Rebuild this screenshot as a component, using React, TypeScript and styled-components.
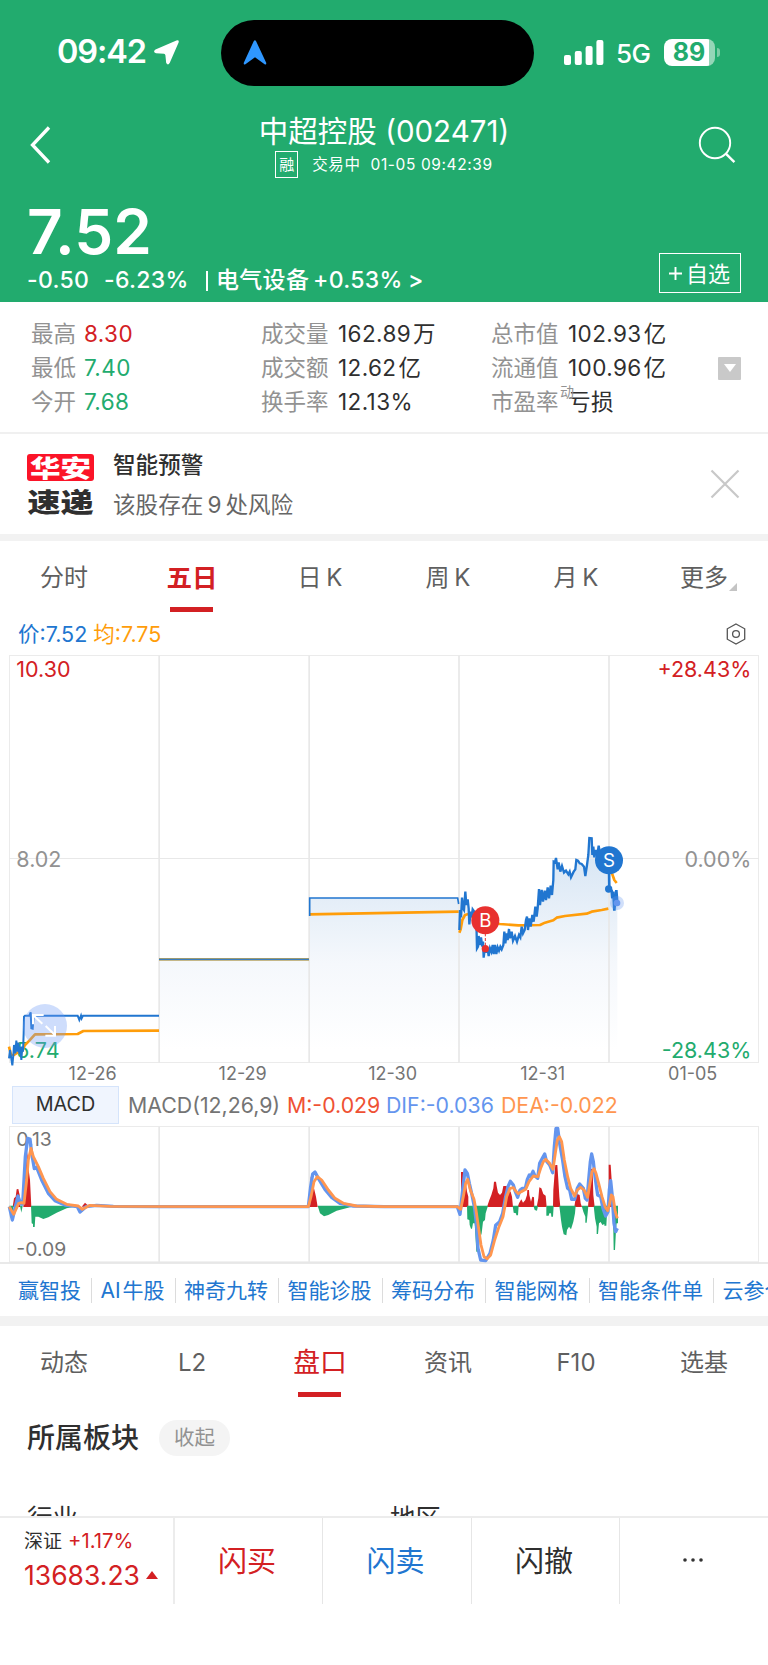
import styled, { createGlobalStyle, css } from "styled-components";

const COLORS = {
  green: "#22ab6e",
  red: "#d32023",
  blue: "#2176d0",
  orange: "#ff9d0a",
  dark: "#2f2f2f",
  gray: "#929292",
};

const STATS = [
  [
    { label: "最高", value: "8.30", color: COLORS.red },
    { label: "成交量", value: "162.89", unit: "万" },
    { label: "总市值", value: "102.93", unit: "亿" },
  ],
  [
    { label: "最低", value: "7.40", color: COLORS.green },
    { label: "成交额", value: "12.62", unit: "亿" },
    { label: "流通值", value: "100.96", unit: "亿" },
  ],
  [
    { label: "今开", value: "7.68", color: COLORS.green },
    { label: "换手率", value: "12.13%" },
    { label: "市盈率", value: "亏损", sup: "动" },
  ],
];

const PERIODS = ["分时", "五日", "日 K", "周 K", "月 K", "更多"];
const SECTIONS = ["动态", "L2", "盘口", "资讯", "F10", "选基"];
const LINKS = ["赢智投", "AI 牛股", "神奇九转", "智能诊股", "筹码分布", "智能网格", "智能条件单", "云参仓"];
const DATES = ["12-26", "12-29", "12-30", "12-31", "01-05"];

function App() {
  return (
    <Page>
      <GlobalStyle />
      <Header />
      <Stats />
      <Alert />
      <Gap $height={7} />
      <Tabs items={PERIODS} active={1} bold />
      <PriceRow>
        <Price>
          <Colored $color={COLORS.blue}>价:7.52</Colored>
          <Colored $color={COLORS.orange}>均:7.75</Colored>
        </Price>
        <svg width="20" height="22" viewBox="0 0 20 22" fill="none" stroke="#555" strokeWidth="1.3">
          <path d="M10 1 L18.7 5.8 V16.2 L10 21 L1.3 16.2 V5.8 Z" />
          <circle cx="10" cy="11" r="3.4" />
        </svg>
      </PriceRow>
      <PriceChart />
      <MacdHead>
        <MacdButton>MACD</MacdButton>
        <MacdItem $color="#747474" $width={151}>MACD(12,26,9)</MacdItem>
        <MacdItem $color="#ef5133" $width={91}>M:-0.029</MacdItem>
        <MacdItem $color="#6495ee" $width={107}>DIF:-0.036</MacdItem>
        <MacdItem $color="#ff964f" $width={115}>DEA:-0.022</MacdItem>
      </MacdHead>
      <MacdChart />
      <Links>
        {LINKS.map((name) => (
          <LinkItem key={name}>{name}</LinkItem>
        ))}
      </Links>
      <Gap $height={10} />
      <Tabs items={SECTIONS} active={2} />
      <Board />
      <BottomBar />
    </Page>
  );
}

export default App;

function Header() {
  return (
    <Top>
      <StatusBar>
        <Clock>
          09:42
          <svg width="25" height="25" viewBox="0 0 25 25" fill="#fff">
            <path d="M22.4 .5 Q25.4 -.5 24.6 2.6 L15.8 22.8 Q14 26 12.2 23 L11.4 15.2 Q11.2 13.9 10 13.8 L2 13.2 Q-1.6 11.8 1.5 9.6 Z" />
          </svg>
        </Clock>
        <Island>
          <svg width="24" height="25" viewBox="0 0 24 25" fill="#2f97ff">
            <path d="M10.7 1.2 Q12 -.6 13.1 1.2 L23.2 22.8 Q23.6 25 21.6 24.2 L12 17.3 L2.4 24.2 Q.4 25 .8 22.8 Z" />
          </svg>
        </Island>
        <Signal>
          <svg width="40" height="25" viewBox="0 0 40 25" fill="#fff">
            <rect x="0" y="15" width="7" height="10" rx="2" />
            <rect x="10.8" y="11" width="7" height="14" rx="2" />
            <rect x="21.6" y="6" width="7" height="19" rx="2" />
            <rect x="32.4" y="0" width="7" height="25" rx="2" />
          </svg>
          <Network>5G</Network>
          <Battery>89</Battery>
        </Signal>
      </StatusBar>
      <NavBar>
        <svg width="22" height="38" viewBox="0 0 22 38" fill="none" stroke="#fff" strokeWidth="3.3">
          <path d="M20 1.5 L3.5 19 L20 36.5" />
        </svg>
        <Titles>
          <Title>中超控股 (002471)</Title>
          <SubTitle>
            <Margin>融</Margin>
            <span>交易中</span>
            <span>01-05 09:42:39</span>
          </SubTitle>
        </Titles>
        <svg width="38" height="38" viewBox="0 0 38 38" fill="none" stroke="#fff" strokeWidth="1.9">
          <circle cx="17" cy="17" r="15.2" />
          <path d="M27.8 27.6 L36.4 36.2" strokeWidth="2.4" />
        </svg>
      </NavBar>
      <Quote>
        <div>
          <BigPrice>7.52</BigPrice>
          <Change>
            <i>-0.50</i>
            <i>-6.23%</i>
            <Divider />
            <i>电气设备</i>
            <i>+0.53%</i>
            <i>&gt;</i>
          </Change>
        </div>
        <AddButton>
          <svg width="13" height="13" viewBox="0 0 13 13" stroke="#fff" strokeWidth="1.9">
            <path d="M6.5 0 V13 M0 6.5 H13" />
          </svg>
          自选
        </AddButton>
      </Quote>
    </Top>
  );
}

function Stats() {
  return (
    <StatsBox>
      {STATS.map((row, i) => (
        <StatsRow key={i}>
          {row.map((s) => (
            <Stat key={s.label}>
              <StatLabel $short={s.label.length === 2}>
                {s.label}
                {s.sup && <Sup>{s.sup}</Sup>}
              </StatLabel>
              <StatValue $color={s.color}>
                {s.value}
                {s.unit && <Unit>{s.unit}</Unit>}
              </StatValue>
            </Stat>
          ))}
          {i === 1 && (
            <Fold>
              <svg width="12" height="8" viewBox="0 0 12 8" fill="#fff">
                <path d="M0 0 H12 L6 8 Z" />
              </svg>
            </Fold>
          )}
        </StatsRow>
      ))}
    </StatsBox>
  );
}

function Alert() {
  return (
    <AlertBox>
      <Logo>
        <LogoTop>
          <LogoWord $size={30.5}>华安</LogoWord>
        </LogoTop>
        <LogoBottom>
          <LogoWord $size={33}>速递</LogoWord>
        </LogoBottom>
      </Logo>
      <AlertText>
        <AlertTitle>智能预警</AlertTitle>
        <AlertDesc>该股存在<b>9</b>处风险</AlertDesc>
      </AlertText>
      <svg width="30" height="30" viewBox="0 0 30 30" stroke="#c8c8c8" strokeWidth="2.2">
        <path d="M1.5 1.5 L28.5 28.5 M28.5 1.5 L1.5 28.5" />
      </svg>
    </AlertBox>
  );
}

interface TabsProps {
  items: string[];
  active: number;
  bold?: boolean;
}

function Tabs({ items, active, bold }: TabsProps) {
  return (
    <TabsBox>
      {items.map((name, i) => (
        <Tab key={name} $active={i === active} $bold={bold}>
          {name}
          {name === "更多" && <Corner />}
        </Tab>
      ))}
    </TabsBox>
  );
}

// Both charts use a viewBox with three units per pixel.
const PRICE_DAY1 =
  "27,775 30,750 33,770 37,796 40,765 42,735 46,760 49,722 52,755 55,728 58,762 61,740 64,780 67,740 69,755 71,700 72,650 75,647 88,647 92,637 94,685 98,686 101,647 233,647 238,660 243,647 245,655 249,647 477,647";
const PRICE_DAY4 =
  "13,300 15,240 18,262 21,203 24,235 27,240 31,185 34,225 38,208 41,235 43,283 47,245 50,262 53,238 58,245 64,270 66,355 69,350 71,318 74,345 78,322 82,350 84,335 86,383 90,350 94,368 97,352 101,378 105,355 109,365 113,345 116,372 120,345 124,372 128,352 132,362 136,350 140,358 145,345 148,305 151,340 155,310 158,330 162,297 165,325 170,305 174,332 180,318 186,335 192,315 196,322 200,290 204,310 209,300 213,270 216,260 219,300 223,265 227,290 232,255 236,275 241,230 245,260 248,235 252,177 255,225 260,180 264,215 269,182 273,210 278,172 282,205 287,167 291,195 295,150 296,95 300,97 303,84 308,118 311,97 316,125 321,108 327,128 333,122 340,133 344,125 348,142 356,125 361,118 364,90 369,92 374,100 380,102 387,110 391,138 396,105 400,75 403,24 410,25 412,75 415,50 418,82 423,60 427,75 431,47 435,70 445,100 460,110";
const PRICE_DAY5 = "462,110 463,180 467,178 470,182 472,205 475,185 478,242 481,200 482,225 484,180 487,219";

const AVG_DAY1 = "27,740 33,765 42,765 52,758 65,755 75,735 88,722 105,703 233,702 250,693 477,692";
const AVG_DAY4 =
  "13,308 17,298 22,270 30,255 40,252 80,275 135,282 190,286 255,285 270,278 295,271 305,263 330,258 395,251 410,245 440,240 460,236";

function PriceChart() {
  return (
    <Chart width="768" height="433" viewBox="0 1950 2304 1299">
      <defs>
        <linearGradient id="area" gradientUnits="userSpaceOnUse" x1="0" y1="2500" x2="0" y2="3150">
          <stop offset="0" stopColor="#d3e3f3" />
          <stop offset=".6" stopColor="#f5f8fc" />
          <stop offset="1" stopColor="#ffffff" />
        </linearGradient>
        <linearGradient id="area4" gradientUnits="userSpaceOnUse" x1="0" y1="10" x2="0" y2="660">
          <stop offset="0" stopColor="#d3e3f3" />
          <stop offset=".6" stopColor="#f5f8fc" />
          <stop offset="1" stopColor="#ffffff" />
        </linearGradient>
      </defs>

      <path d="M477 2878 H927 V3186 H477 Z" fill="url(#area)" />
      <path d="M927 2694 H1376 V3186 H927 Z" fill="url(#area)" />
      <g transform="translate(1365 2490)">
        <polygon points={`13,696 ${PRICE_DAY4} ${PRICE_DAY5} 487,696`} fill="url(#area4)" />
      </g>

      <g stroke="#e8e8e8" strokeWidth="3" fill="none">
        <rect x="28.5" y="1966.5" width="2247" height="1221" stroke="#ebebeb" />
        <path d="M28 2575.5 H2277" />
        <path d="M477.5 1967 V3188 M927.5 1967 V3188 M1377 1967 V3188 M1827 1967 V3188" strokeWidth="5" />
      </g>

      <AxisText x="49" y="2030" fill={COLORS.red}>10.30</AxisText>
      <AxisText x="49" y="2600" fill={COLORS.gray}>8.02</AxisText>
      <AxisText x="49" y="3173" fill={COLORS.green}>5.74</AxisText>
      <AxisText x="2254" y="2030" fill={COLORS.red} textAnchor="end">+28.43%</AxisText>
      <AxisText x="2254" y="2600" fill={COLORS.gray} textAnchor="end">0.00%</AxisText>
      <AxisText x="2254" y="3173" fill={COLORS.green} textAnchor="end">-28.43%</AxisText>

      <g fill="none" stroke={COLORS.orange} strokeWidth="8" strokeLinejoin="round">
        <polyline points={AVG_DAY1} transform="translate(0 2400)" />
        <path d="M477 2878 H927" stroke="#b5a262" />
        <path d="M927 2743 L1376 2735" />
        <polyline points={AVG_DAY4} transform="translate(1365 2490)" />
        <path d="M1836 2620 L1843 2640 L1850 2649" />
      </g>
      <g fill="none" stroke={COLORS.blue} strokeWidth="6">
        <polyline points={PRICE_DAY1} transform="translate(0 2400)" />
        <path d="M477 2878 H927" strokeWidth="3" />
        <path d="M929 2748 V2694 H1373 L1376 2712" strokeWidth="5" />
        <g transform="translate(1365 2490)">
          <polyline points={PRICE_DAY4} strokeWidth="7" />
          <polyline points={PRICE_DAY5} strokeWidth="8" />
        </g>
      </g>

      <g transform="translate(1365 2490)">
        <path d="M91 310 V356" stroke="#e8312f" strokeWidth="3" strokeDasharray="9 5" />
        <circle cx="91" cy="356" r="11" fill="#e8312f" />
        <circle cx="91" cy="271" r="42" fill="#e8312f" />
        <PinText x="91" y="291">B</PinText>
        <circle cx="461" cy="177" r="11" fill={COLORS.blue} />
        <circle cx="462" cy="91" r="42" fill={COLORS.blue} />
        <PinText x="462" y="111">S</PinText>
        <circle cx="486" cy="219" r="21" fill="#6495ee" opacity=".3" />
        <circle cx="486" cy="219" r="10" fill="#6495ee" />
      </g>

      <circle cx="135" cy="3078" r="66" fill="#6e9bf5" opacity=".34" />
      <path
        d="M131 3045 H99 V3073 M99 3045 L127 3071 M137 3078 L165 3105 M165 3078 V3107 H136"
        fill="none"
        stroke="#fff"
        strokeWidth="6"
      />

      {DATES.map((date, i) => (
        <DateText key={date} x={278 + i * 450} y="3241">
          {date}
        </DateText>
      ))}
    </Chart>
  );
}

const DIF_LEFT =
  "28,380 37,420 46,380 54,348 62,372 68,372 76,230 83,175 90,177 95,220 103,266 110,262 125,300 145,340 165,362 195,375 232,380 240,396 258,380 290,376 340,379 477,380 925,380 932,320 938,282 945,276 955,295 975,328 995,352 1020,370 1060,378 1152,380";
const DEA_LEFT =
  "28,380 41,403 56,370 64,368 72,370 80,300 85,240 93,205 100,230 115,260 130,295 150,335 170,358 200,373 235,378 247,388 270,376 330,379 925,380 933,350 942,305 952,290 965,300 985,330 1005,355 1030,370 1070,378 1152,380";
const DIF_RIGHT =
  "0,380 220,380 228,403 236,330 243,270 250,280 256,310 264,345 272,385 278,440 282,505 290,540 305,542 318,520 328,480 335,436 347,425 356,400 365,350 372,320 379,304 388,315 394,335 401,352 408,330 415,325 424,325 430,298 436,285 440,290 447,274 453,288 461,295 467,250 475,235 482,222 487,243 497,255 506,278 511,200 516,145 521,145 527,190 535,235 543,290 551,325 557,330 563,358 572,358 580,325 587,312 598,325 604,355 609,360 614,300 619,245 623,222 628,245 633,290 641,345 650,350 657,385 665,408 672,395 676,330 680,302 684,340 690,430 695,455 700,445";
const DEA_RIGHT =
  "0,380 220,380 230,388 238,350 245,310 251,298 259,330 270,358 276,390 284,445 291,495 300,530 310,536 320,525 332,480 345,440 357,410 368,350 378,325 388,323 395,333 403,341 412,335 425,328 435,305 448,288 462,290 470,265 478,245 485,238 497,250 507,268 514,220 520,180 526,170 533,185 541,240 551,290 560,325 572,348 580,330 590,322 600,330 611,352 618,310 624,275 630,266 636,280 644,310 654,350 664,382 671,392 676,375 682,345 687,350 694,395 700,415";

const UP_LEFT = [
  "38,381 42,355 47,350 50,328 55,327 59,345 61,381",
  "70,381 74,300 82,215 86,270 90,300 94,381",
  "245,380 255,368 268,380",
  "930,381 932,290 936,290 942,325 948,350 953,381",
];
const DOWN_LEFT = [
  "28,377 37,402 41,377",
  "60,377 64,398 68,377",
  "93,377 95,430 99,432 99,441 104,441 106,410 115,410 130,417 145,412 170,398 200,385 240,377",
  "953,377 960,400 972,409 985,405 1010,392 1050,382 1080,377",
];
const UP_RIGHT = [
  "231,381 231,276 237,276 238,300 245,305 249,335 253,350 253,381",
  "309,381 316,360 322,345 328,325 330,305 336,305 338,318 342,338 348,345 354,338 358,318 368,318 370,330 380,335 384,350 387,381",
  "401,381 405,370 412,358 417,368 424,360 429,345 430,330 435,330 436,345 441,365 445,350 450,352 451,381",
  "458,381 463,355 466,322 472,325 478,342 485,347 488,381",
  "507,381 508,330 513,265 514,255 520,255 523,300 526,350 529,381",
  "571,381 575,355 580,342 587,345 590,370 594,381",
  "612,381 616,330 620,265 626,270 628,345 632,381",
  "674,381 674,254 680,254 681,270 683,300 688,381",
];
const DOWN_RIGHT = [
  "249,377 250,418 256,420 257,435 261,446 264,446 267,430 272,430 277,515 283,515 287,480 293,460 297,425 303,420 305,400 312,377",
  "386,377 389,398 396,400 397,406 402,406 404,377",
  "448,377 452,390 459,392 462,377",
  "487,377 487,407 494,407 496,400 501,400 502,410 507,410 509,377",
  "526,377 531,420 534,440 539,463 547,466 549,450 555,440 561,448 568,425 573,400 575,377",
  "593,377 598,395 604,410 604,428 608,428 611,400 613,377",
  "629,377 633,415 638,440 638,462 642,462 645,430 650,426 655,435 661,432 661,437 667,437 669,400 672,377",
  "684,377 688,450 689,510 693,510 696,450 698,430 702,430 702,377",
];

function MacdChart() {
  const halves = [
    { x: 0, up: UP_LEFT, down: DOWN_LEFT, dif: DIF_LEFT, dea: DEA_LEFT },
    { x: 1152, up: UP_RIGHT, down: DOWN_RIGHT, dif: DIF_RIGHT, dea: DEA_RIGHT },
  ];

  return (
    <Chart width="768" height="140" viewBox="0 132 2304 420">
      <g stroke="#e8e8e8" strokeWidth="3" fill="none">
        <rect x="28.5" y="139.5" width="2247" height="406" stroke="#ebebeb" />
        <path d="M477.5 140 V546 M927.5 140 V546 M1377 140 V546 M1827 140 V546" strokeWidth="5" />
        <path d="M0 549 H2304" stroke="#e2e2e2" strokeWidth="4" />
      </g>
      <MacdText x="49" y="197">0.13</MacdText>
      <MacdText x="49" y="527">-0.09</MacdText>
      {halves.map((h) => (
        <g key={h.x} transform={`translate(${h.x} 0)`}>
          <g fill={COLORS.red}>
            {h.up.map((points) => (
              <polygon key={points} points={points} />
            ))}
          </g>
          <g fill={COLORS.green}>
            {h.down.map((points) => (
              <polygon key={points} points={points} />
            ))}
          </g>
          <polyline points={h.dif} fill="none" stroke="#6495ee" strokeWidth="10" strokeLinejoin="round" />
          <polyline points={h.dea} fill="none" stroke="#ff964f" strokeWidth="8.5" strokeLinejoin="round" />
        </g>
      ))}
    </Chart>
  );
}

function Board() {
  return (
    <BoardBox>
      <BoardHead>
        <BoardTitle>所属板块</BoardTitle>
        <Pill>收起</Pill>
      </BoardHead>
      <BoardCols>
        <span>行业</span>
        <span>地区</span>
      </BoardCols>
    </BoardBox>
  );
}

function BottomBar() {
  return (
    <Footer>
      <IndexCell>
        <IndexName>
          深证<IndexRate>+1.17%</IndexRate>
        </IndexName>
        <IndexValue>
          13683.23
          <svg width="12" height="8" viewBox="0 0 12 8" fill={COLORS.red}>
            <path d="M6 0 L12 8 H0 Z" />
          </svg>
        </IndexValue>
      </IndexCell>
      <Action $color={COLORS.red}>闪买</Action>
      <Action $color={COLORS.blue}>闪卖</Action>
      <Action $color={COLORS.dark}>闪撤</Action>
      <Action $color={COLORS.dark}>
        <svg width="22" height="9" viewBox="0 0 22 9" fill="#333">
          <circle cx="3" cy="3" r="1.8" />
          <circle cx="11" cy="3" r="1.8" />
          <circle cx="19" cy="3" r="1.8" />
        </svg>
      </Action>
    </Footer>
  );
}

const GlobalStyle = createGlobalStyle`
  * {
    box-sizing: border-box;
  }

  body {
    margin: 0;
    background-color: #fff;
  }

  i, b {
    font-style: normal;
    font-weight: inherit;
  }
`;

const Page = styled.div`
  width: 768px;
  height: 1665px;
  overflow: hidden;
  font-family: Inter, "Noto Sans CJK SC", sans-serif;
  line-height: 1;
  color: ${COLORS.dark};
  white-space: nowrap;

  svg {
    flex-shrink: 0;
  }
`;

const Top = styled.header`
  height: 302px;
  background-color: ${COLORS.green};
  color: #fff;
`;

const StatusBar = styled.div`
  display: grid;
  grid-template-columns: 221px 313px 1fr;
  padding-top: 20px;
  height: 86px;
`;

const Clock = styled.div`
  display: flex;
  align-items: center;
  gap: 8px;
  padding: 0 0 1px 57px;
  font-size: 32.5px;
  font-weight: 600;
  letter-spacing: -1.1px;
`;

const Island = styled.div`
  display: flex;
  align-items: center;
  padding-left: 22px;
  padding-bottom: 2px;
  border-radius: 33px;
  background-color: #000;
`;

const Signal = styled.div`
  display: flex;
  align-items: center;
  padding: 0 0 2px 30px;
`;

const Network = styled.span`
  margin: 3px 0 0 12px;
  width: 51px;
  font-size: 26px;
  font-weight: 500;
  letter-spacing: -0.6px;
`;

const Battery = styled.div`
  position: relative;
  width: 51px;
  height: 27px;
  margin-left: -3px;
  padding-right: 1px;
  border-radius: 8px;
  background: linear-gradient(90deg, #fff 45px, #94d6b7 45px);
  color: ${COLORS.green};
  font-size: 25px;
  font-weight: 700;
  line-height: 27px;
  text-align: center;

  &::after {
    content: "";
    position: absolute;
    right: -5px;
    top: 9px;
    width: 3px;
    height: 9px;
    border-radius: 0 4px 4px 0;
    background-color: #7acca5;
  }
`;

const NavBar = styled.div`
  display: grid;
  grid-template-columns: 22px 1fr 38px;
  height: 110px;
  padding: 40px 32px 0 29px;
`;

const Titles = styled.div`
  display: flex;
  flex-direction: column;
  align-items: center;
  margin: -11px 0 0 19px;
`;

const Title = styled.h1`
  margin: 0;
  font-size: 29.5px;
  font-weight: 400;
  line-height: 32px;
`;

const SubTitle = styled.div`
  display: flex;
  align-items: center;
  gap: 10px;
  margin-top: 4px;
  font-size: 15.5px;
  letter-spacing: 0.6px;
`;

const Margin = styled.span`
  width: 23px;
  height: 27px;
  margin-right: 4px;
  border: 1px solid #fff;
  font-size: 15px;
  letter-spacing: 0;
  line-height: 25px;
  text-align: center;
`;

const Quote = styled.div`
  display: flex;
  justify-content: space-between;
  padding: 0 27px 0 27px;
`;

const BigPrice = styled.div`
  padding-top: 5px;
  font-size: 62px;
  font-weight: 600;
  line-height: 62px;
`;

const Change = styled.div`
  display: grid;
  grid-template-columns: 77px 101px 11px 97px 95px auto;
  margin-top: 6px;
  font-size: 23px;
  font-weight: 500;
  line-height: 23px;
  letter-spacing: 0.3px;
`;

const Divider = styled.span`
  width: 2px;
  height: 20px;
  margin: 2px 0 0 1px;
  background-color: #fff;
`;

const AddButton = styled.button`
  display: flex;
  align-items: center;
  justify-content: center;
  gap: 4px;
  width: 82px;
  height: 40px;
  margin: 57px 0 0;
  padding: 0 1px 2px 0;
  border: 1px solid #fff;
  background: none;
  color: #fff;
  font: 22px Inter, "Noto Sans CJK SC", sans-serif;

  svg {
    margin-top: 3px;
  }
`;

const StatsBox = styled.section`
  height: 132px;
  padding: 15px 27px 0 31px;
  border-bottom: 2px solid #f0f0f0;
`;

const StatsRow = styled.div`
  display: grid;
  grid-template-columns: 230px 230px 227px auto;
  align-items: center;
  height: 34px;
`;

const Stat = styled.div`
  display: flex;
  align-items: center;
  font-size: 22.5px;
`;

const StatLabel = styled.span<{ $short: boolean }>`
  position: relative;
  width: ${(props) => (props.$short ? 53 : 77)}px;
  color: ${COLORS.gray};
`;

const StatValue = styled.span<{ $color?: string }>`
  color: ${(props) => props.$color ?? COLORS.dark};
  letter-spacing: 0.4px;
`;

const Unit = styled.span`
  margin-left: 2px;
`;

const Sup = styled.sup`
  position: absolute;
  left: 69px;
  top: -6px;
  font-size: 14px;
  line-height: 1;
`;

const Fold = styled.span`
  display: flex;
  align-items: center;
  justify-content: center;
  width: 23px;
  height: 23px;
  border-radius: 1px;
  background-color: #c9c9c9;
`;

const AlertBox = styled.section`
  display: flex;
  height: 100px;
  padding: 19px 28px 0 27px;

  > svg {
    margin: 16px 0 0 auto;
  }
`;

const Logo = styled.div`
  width: 67px;
  padding-top: 1px;
`;

const LogoTop = styled.div`
  display: flex;
  align-items: center;
  justify-content: center;
  height: 27px;
  border-radius: 3px;
  background-color: #fb1428;
  color: #fff;
`;

const LogoBottom = styled.div`
  display: flex;
  align-items: center;
  justify-content: center;
  height: 27px;
  margin-top: 7px;
`;

const LogoWord = styled.span<{ $size: number }>`
  font-family: "Noto Sans CJK SC", sans-serif;
  font-size: ${(props) => props.$size}px;
  font-weight: 900;
  transform: scaleY(0.8);
`;

const AlertText = styled.div`
  margin-left: 19px;
  font-size: 22.6px;
`;

const AlertTitle = styled.div`
  font-weight: 500;
  line-height: 23px;
`;

const AlertDesc = styled.div`
  margin-top: 17px;
  color: #666;
  line-height: 23px;

  b {
    margin: 0 4px;
  }
`;

const Gap = styled.div<{ $height: number }>`
  height: ${(props) => props.$height}px;
  background-color: #f2f2f2;
`;

const TabsBox = styled.nav`
  display: grid;
  grid-template-columns: repeat(6, 1fr);
  height: 74px;
`;

const Tab = styled.div<{ $active: boolean; $bold?: boolean }>`
  position: relative;
  line-height: 73px;
  text-align: center;
  font-size: 24px;
  word-spacing: -2px;
  color: #5f5f5f;

  ${(props) =>
    props.$active &&
    css`
      color: ${COLORS.red};
      font-size: ${props.$bold ? 25.5 : 26.8}px;
      font-weight: ${props.$bold ? 700 : 400};

      &::after {
        content: "";
        position: absolute;
        left: 42px;
        bottom: 3px;
        width: 43px;
        height: 5px;
        background-color: ${COLORS.red};
      }
    `}
`;

const Corner = styled.span`
  position: absolute;
  right: 31px;
  bottom: 24px;
  border: 4px solid transparent;
  border-right-color: #c4c4c4;
  border-bottom-color: #c4c4c4;
`;

const PriceRow = styled.div`
  display: flex;
  align-items: center;
  justify-content: space-between;
  height: 35px;
  padding: 3px 22px 0 18px;
`;

const Price = styled.div`
  display: flex;
  gap: 6px;
  padding-top: 1px;
  font-size: 21.5px;
`;

const Colored = styled.span<{ $color: string }>`
  color: ${(props) => props.$color};
`;

const Chart = styled.svg`
  display: block;
  font-family: Inter, sans-serif;
`;

const AxisText = styled.text`
  font-size: 64.5px;
`;

const MacdText = styled.text`
  font-size: 58px;
  fill: #747474;
`;

const DateText = styled.text`
  font-size: 54px;
  fill: #747474;
  text-anchor: middle;
`;

const PinText = styled.text`
  font-size: 56px;
  fill: #fff;
  text-anchor: middle;
`;

const MacdHead = styled.div`
  display: flex;
  align-items: center;
  gap: 8px;
  height: 41px;
  padding: 2px 0 0 12px;
  font-size: 21.3px;
`;

const MacdButton = styled.button`
  width: 107px;
  height: 38px;
  margin-right: 1px;
  padding: 0 0 1px;
  border: 1px solid #d5e4fb;
  background-color: #f0f5fe;
  color: ${COLORS.dark};
  font: 19.8px Inter, sans-serif;
`;

const MacdItem = styled.span<{ $color: string; $width: number }>`
  width: ${(props) => props.$width}px;
  padding-top: 3px;
  color: ${(props) => props.$color};
`;

const Links = styled.div`
  display: flex;
  align-items: center;
  height: 52px;
  padding-left: 18px;
  overflow: hidden;
  color: ${COLORS.blue};
  font-size: 21px;
`;

const LinkItem = styled.a`
  padding: 2px 10px 2px 0;
  margin-right: 8.5px;
  border-right: 1px solid #dcdcdc;
  word-spacing: -4px;
`;

const BoardBox = styled.section`
  height: 116px;
  overflow: hidden;
`;

const BoardHead = styled.div`
  display: flex;
  align-items: center;
  gap: 20px;
  padding: 20px 0 0 27px;
`;

const BoardTitle = styled.h2`
  margin: 0;
  font-size: 28px;
  font-weight: 500;
`;

const Pill = styled.span`
  width: 71px;
  height: 36px;
  border-radius: 18px;
  background-color: #f4f4f4;
  color: ${COLORS.gray};
  font-size: 20.5px;
  line-height: 36px;
  text-align: center;
`;

const BoardCols = styled.div`
  display: grid;
  grid-template-columns: 363px 1fr;
  padding: 49px 0 0 27px;
  font-size: 25.5px;
`;

const Footer = styled.footer`
  display: grid;
  grid-template-columns: 175px 148px 149px 148px 1fr;
  height: 88px;
  border-top: 2px solid #ececec;
`;

const IndexCell = styled.div`
  padding: 14px 0 0 24px;
  border-right: 2px solid #ececec;
`;

const IndexName = styled.div`
  display: flex;
  align-items: center;
  gap: 6px;
  height: 19px;
  font-size: 19px;
`;

const IndexRate = styled.span`
  color: ${COLORS.red};
  font-size: 20.3px;
`;

const IndexValue = styled.div`
  display: flex;
  align-items: center;
  gap: 6px;
  margin-top: 11px;
  color: ${COLORS.red};
  font-size: 26.5px;
`;

const Action = styled.div<{ $color: string }>`
  display: flex;
  align-items: center;
  justify-content: center;
  padding-right: 3px;
  border-right: 1px solid #e6e6e6;
  color: ${(props) => props.$color};
  font-size: 29px;

  &:last-child {
    border-right: none;
  }
`;
